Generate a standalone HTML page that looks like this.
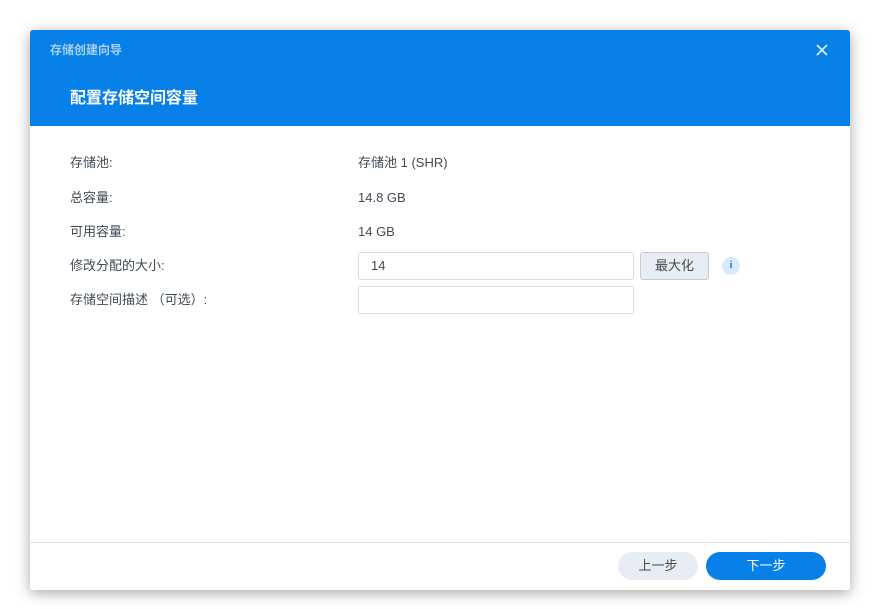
<!DOCTYPE html>
<html><head><meta charset="utf-8"><style>
body{margin:0;width:874px;height:609px;background:#fff;font-family:"Liberation Sans","Noto Sans CJK SC",sans-serif;position:relative;overflow:hidden}
.dlg{position:absolute;left:30px;top:30px;width:820px;height:560px;background:#fff;border-radius:3px;box-shadow:0 3px 14px rgba(0,0,0,.35);overflow:hidden}
.hd{position:absolute;left:0;top:0;width:820px;height:96px;background:#0780e8}
.t1{position:absolute;left:20px;top:11px;font-size:12px;font-weight:bold;color:#a9cff5}
.t2{position:absolute;left:40px;top:54px;font-size:16px;font-weight:bold;color:#fff}
.x{position:absolute;left:785px;top:13px;width:14px;height:14px}
.lb,.vl{position:absolute;font-size:13px;color:#414b55;line-height:16px;height:16px}
.lb{left:40px}.vl{left:328px}
.in{position:absolute;left:328px;width:274px;height:26px;border:1px solid #d6dee6;border-radius:3px;box-sizing:content-box}
.btn{position:absolute;left:610px;top:222px;width:67px;height:26px;background:#e8edf4;border:1px solid #c3cbd4;border-radius:3px;font-size:13px;color:#414b55;text-align:center;line-height:26px}
.info{position:absolute;left:692px;top:227px;width:18px;height:18px;border-radius:50%;background:#d9eafb;color:#0780e8;font-size:10px;font-weight:bold;text-align:center;line-height:18px;font-family:"Liberation Serif",serif}
.ft{position:absolute;left:0;top:512px;width:820px;height:1px;background:#dfe5ec}
.b1{position:absolute;left:588px;top:522px;width:80px;height:28px;border-radius:14px;background:#e8edf4;color:#414b55;font-size:13px;text-align:center;line-height:28px}
.b2{position:absolute;left:676px;top:522px;width:120px;height:28px;border-radius:14px;background:#0780e8;color:#fff;font-size:13px;text-align:center;line-height:28px}
</style></head><body>
<div class="dlg">
<div class="hd">
<div class="t1">存储创建向导</div>
<div class="t2">配置存储空间容量</div>
<svg class="x" viewBox="0 0 14 14"><path d="M2 2L12 12M12 2L2 12" stroke="#dbe9f8" stroke-width="1.8"/></svg>
</div>
<div class="lb" style="top:125px">存储池:</div><div class="vl" style="top:125px">存储池 1 (SHR)</div>
<div class="lb" style="top:160px">总容量:</div><div class="vl" style="top:160px">14.8 GB</div>
<div class="lb" style="top:194px">可用容量:</div><div class="vl" style="top:194px">14 GB</div>
<div class="lb" style="top:228px">修改分配的大小:</div>
<div class="in" style="top:222px"><span style="position:absolute;left:12px;top:5px;font-size:13px;line-height:16px;color:#414b55">14</span></div>
<div class="btn">最大化</div>
<div class="info">i</div>
<div class="lb" style="top:262px">存储空间描述 （可选）:</div>
<div class="in" style="top:256px"></div>
<div class="ft"></div>
<div class="b1">上一步</div>
<div class="b2">下一步</div>
</div>
</body></html>
